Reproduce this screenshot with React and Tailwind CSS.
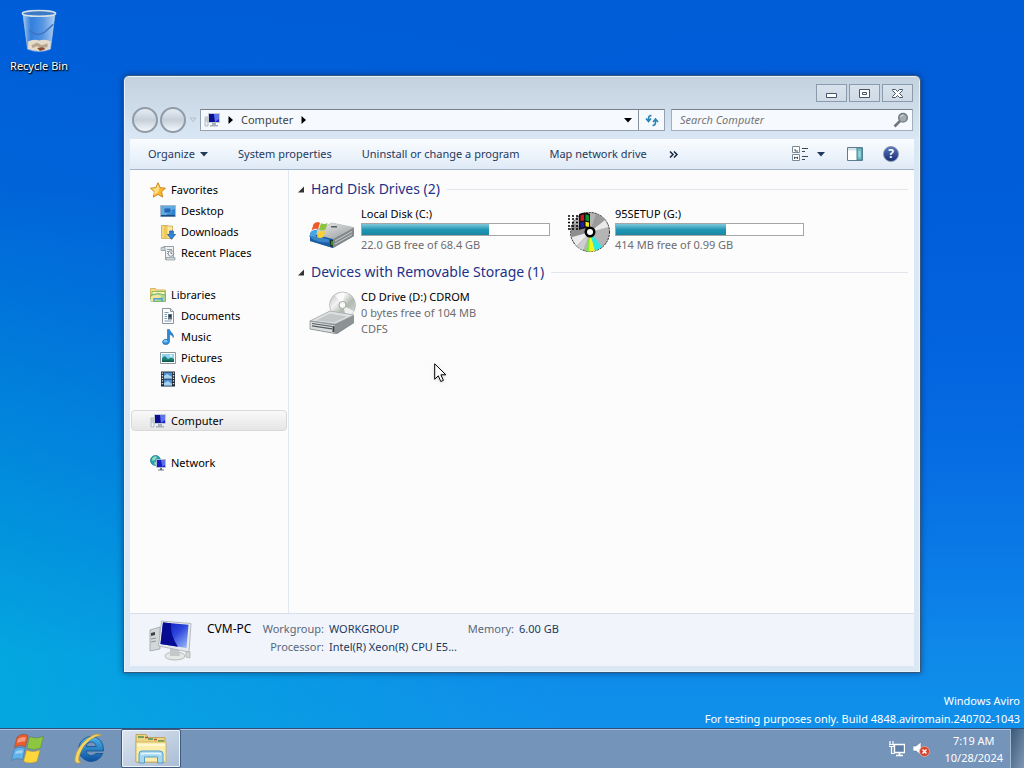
import { useState } from 'react';

const RecycleBinIcon = () => (
  <svg width="38" height="46" viewBox="0 0 40 46" aria-hidden="true">
    <defs>
      <linearGradient id="bin" x1="0" x2="1">
        <stop offset="0" stopColor="#cfe2f2" stopOpacity=".85" />
        <stop offset=".25" stopColor="#5b9be0" stopOpacity=".55" />
        <stop offset=".6" stopColor="#8cb9ea" stopOpacity=".6" />
        <stop offset="1" stopColor="#d7e6f4" stopOpacity=".85" />
      </linearGradient>
    </defs>
    <path d="M3 4 L8 42 Q20 47 32 42 L37 4 Z" fill="url(#bin)" stroke="#a9c6e2" strokeWidth=".8" />
    <path d="M8.500 34 Q14 31 20 33 Q27 31 32.500 34 L31.500 42 Q20 46 8.500 42 Z" fill="#e6dccb" />
    <path d="M12 38 l6 -3 l5 3 l6 -2 v4 l-7 1 l-4 -2 l-5 2z" fill="#b9a68f" />
    <path d="M18 41 l6 -1 l3 2 l-6 2z" fill="#8a4a2e" />
    <path d="M10 22 Q18 30 26 24 L35 16" fill="none" stroke="#3f72c4" strokeWidth="1.500" />
    <ellipse cx="20" cy="4.500" rx="17.500" ry="3" fill="#3c7ac6" stroke="#d5e0e8" strokeWidth="1.600" />
  </svg>
);

const ComputerIcon = () => (
  <svg width="16" height="16" viewBox="0 0 16 16" aria-hidden="true">
    <path d="M1 5h3v9H1z" fill="#eceff1" stroke="#a4acb3" strokeWidth=".8" />
    <path d="M1.500 7h2M1.500 9h2" stroke="#8d969e" strokeWidth=".7" />
    <path d="M4.500 1.500h11v9h-11z" fill="#1a22c8" stroke="#c4cad4" />
    <path d="M5 2h5l1 8H5z" fill="#0a0f90" />
    <path d="M10 2h5v5l-4 3z" fill="#5f74ea" />
    <path d="M8 11h4v2h2v1.500H6V13h2z" fill="#a7b0ba" />
  </svg>
);

const StarIcon = () => (
  <svg width="16" height="16" viewBox="0 0 16 16" aria-hidden="true">
    <path d="M8 .7l2.200 4.900 5.300.6-3.900 3.600 1.100 5.300L8 12.400l-4.700 2.700 1.100-5.300L.5 6.200l5.300-.6z" fill="#fbb62b" stroke="#c8801c" strokeWidth=".9" />
    <path d="M8 2.600l1.500 3.700-1.500 4-4.500 3 1.300-4.200L2 6.800l4.200-.5z" fill="#ffe08a" />
  </svg>
);

const DesktopIcon = () => (
  <svg width="16" height="16" viewBox="0 0 16 16" aria-hidden="true">
    <path d="M.5 2.500h15v11H.5z" fill="#2f82cc" stroke="#a8bccd" />
    <path d="M1 3h14v3Q9 7 6 12.500H1z" fill="#5ea9e0" />
    <path d="M4 5h7v5H4z" fill="#2166b4" stroke="#7db8e6" strokeWidth=".7" />
    <path d="M1 12h14v1.500H1z" fill="#1a4d86" />
  </svg>
);

const DownloadsIcon = () => (
  <svg width="16" height="16" viewBox="0 0 16 16" aria-hidden="true">
    <path d="M1.500 1.500h6v13h-6z" fill="#f3d87b" stroke="#cda94a" strokeWidth=".8" />
    <path d="M5.500 2h7v12.500h-7z" fill="#fae8a6" stroke="#cda94a" strokeWidth=".8" />
    <path d="M4 1.500l3.500 2v11.800L4 13.500z" fill="#edc95c" />
    <path d="M9.700 7h3.600v3.500h2.200l-4 4.800-4-4.800h2.200z" fill="#2f86d6" stroke="#195ba3" strokeWidth=".8" />
  </svg>
);

const RecentIcon = () => (
  <svg width="16" height="16" viewBox="0 0 16 16" aria-hidden="true">
    <path d="M3.500 1.500h10v13h-8v-9h-4v-2z" fill="#edf0f2" stroke="#8f999f" strokeWidth=".9" />
    <path d="M1 2.500h4v3H1zM6 12.500h9v2.500H6z" fill="#cfd6da" stroke="#8f999f" strokeWidth=".7" />
    <path d="M7 4.500h5M7 6.500h2M7 8.500h2" stroke="#98a4ac" />
    <circle cx="11" cy="8.500" r="2.800" fill="#f8fafb" stroke="#7f8a92" strokeWidth=".9" />
    <path d="M11 6.800v1.900h1.500" fill="none" stroke="#4a5864" strokeWidth=".8" />
  </svg>
);

const LibrariesIcon = () => (
  <svg width="16" height="16" viewBox="0 0 16 16" aria-hidden="true">
    <path d="M.5 1.500h5l1 1.500h9v9H.5z" fill="#f5dd82" stroke="#c9a948" strokeWidth=".8" />
    <path d="M2 4.500h13v4H2z" fill="#fdf3c2" stroke="#82b955" strokeWidth=".9" />
    <path d="M1 8Q8 5 15.500 8v6.500H1z" fill="#a8d68f" stroke="#6fae60" strokeWidth=".8" />
    <path d="M1 9.500Q7 7 12 9L3.500 14.500H1z" fill="#f7e59b" />
    <path d="M4 14.500v-2.800h8v2.800" fill="none" stroke="#4ea2d8" strokeWidth="1.500" />
  </svg>
);

const DocumentsIcon = () => (
  <svg width="16" height="16" viewBox="0 0 16 16" aria-hidden="true">
    <path d="M2.500.5h8l3 3v12h-11z" fill="#fcfdfe" stroke="#8b959d" />
    <path d="M10.500.5v3h3" fill="#dfe5ea" stroke="#8b959d" />
    <path d="M4.500 4.500h4M4.500 6.500h2.500M4.500 8.500h2.500M4.500 10.500h2.500M4.500 13h7" stroke="#8197ab" />
    <path d="M8 6h4v5.500H8z" fill="#5d7388" />
    <path d="M9 7h2v2H9z" fill="#263746" />
  </svg>
);

const MusicIcon = () => (
  <svg width="16" height="16" viewBox="0 0 16 16" aria-hidden="true">
    <path d="M7.500.5h2c.5 3 4.500 3.500 3.800 8-.6-2-2-2.700-3.800-3v7c-.2 4-6.700 4-7 .7C2.400 10.700 5.500 9.800 7.500 10.500z" fill="#2b8ad6" stroke="#1f65a8" strokeWidth=".6" />
    <ellipse cx="5.500" cy="12.300" rx="2" ry="1.300" fill="#7cc4f1" />
  </svg>
);

const PicturesIcon = () => (
  <svg width="16" height="16" viewBox="0 0 16 16" aria-hidden="true">
    <path d="M.5 2.500h15v11H.5z" fill="#fff" stroke="#8d979e" />
    <path d="M2 4h12v8H2z" fill="#8fd3ec" />
    <path d="M2 8l3-2 3 3 3-1.500 3 1.500v3H2z" fill="#1f8176" />
    <path d="M2 10.500h12V12H2z" fill="#0f564d" />
    <circle cx="11" cy="5.800" r="1" fill="#fff" />
  </svg>
);

const VideosIcon = () => (
  <svg width="16" height="16" viewBox="0 0 16 16" aria-hidden="true">
    <path d="M1 .5h14v15H1z" fill="#1f2a36" />
    <path d="M4 1.500h8v6H4zM4 8.500h8v6H4z" fill="#4f8fd0" />
    <path d="M4 5l3-2 5 3v1.500H4zM4 12l4-2 4 3v1.500H4z" fill="#a7d2f0" />
    <path d="M2.500 1.500v13M13.500 1.500v13" stroke="#dbe3ea" strokeWidth="1.400" strokeDasharray="1.300 1.300" />
  </svg>
);

const NetworkIcon = () => (
  <svg width="16" height="16" viewBox="0 0 16 16" aria-hidden="true">
    <circle cx="5.500" cy="5.500" r="5" fill="#24a2b8" stroke="#19778c" strokeWidth=".7" />
    <path d="M2 3.500Q5 0 7 2L5 5 2.500 6zM4 7.500l3-1v3l-2 .8z" fill="#8be0b0" />
    <path d="M6.500 4.500h9v8h-9z" fill="#161ec0" stroke="#bac3d2" strokeWidth=".9" />
    <path d="M11 5h4v5l-2.500 2z" fill="#5c70e8" />
    <path d="M10 13h2v1.500h2v1H8v-1h2z" fill="#6b7684" />
  </svg>
);

const HardDiskIcon = () => (
  <svg width="48" height="48" viewBox="0 0 48 48" aria-hidden="true">
    <defs>
      <linearGradient id="hddTop" x1="0" y1="0" x2="1" y2="1">
        <stop offset="0" stopColor="#f0f1f1" />
        <stop offset="1" stopColor="#979b9d" />
      </linearGradient>
    </defs>
    <path d="M2 27L24 17l22 4.500v8.500L25 42 2 35z" fill="#6d7376" />
    <path d="M2 27L24 17l22 4.500L25 33z" fill="url(#hddTop)" stroke="#c6cacb" strokeWidth=".8" />
    <path d="M25 33l21-11.500v8.500L25 42z" fill="#84898c" />
    <path d="M27 35l17-9.500M27 38l17-9.500" stroke="#c9cdcf" />
    <path d="M2 27l23 6v9L2 35z" fill="#1a5ea8" />
    <path d="M3 29l18 4.500v3Q10 37 3 32z" fill="#3b86c6" />
    <path d="M22 33.500l3 .5v7l-3-.8z" fill="#26332c" />
    <path d="M23.500 35l1 .2v4l-1-.2z" fill="#47d34a" />
    <path d="M23 20h6v1.500h-6z" fill="#565c60" />
    <path d="M5.500 18q4-3.500 6.500-1l-2 6.500q-3-2-6.500 1z" fill="#ef5a2c" />
    <path d="M13 17q3 2 6.500 0l-2 6.500q-3.500 2-6.500 0z" fill="#8bc53f" />
    <path d="M3 25.500q4-3 6.500-1l-2 6.500q-3-2-6.500 0z" fill="#48a5e4" />
    <path d="M11 24.500q3 2 6.500 0l-2 6.500q-3.500 2-6.500 0z" fill="#fbd034" />
  </svg>
);

const SetupDiscIcon = () => (
  <svg width="48" height="48" viewBox="-3 0 48 48" aria-hidden="true">
    <circle cx="25" cy="26" r="19.500" fill="#b4b4b4" stroke="#202020" strokeDasharray="2 1" />
    <path d="M25 26L8 17a19 19 0 0 0-1.500 14z" fill="#8e8e8e" />
    <path d="M25 26L31 7.500a19 19 0 0 1 12 12z" fill="#9a9a9a" />
    <path d="M25 26L40 14l3.500 7z" fill="#e9e9e9" />
    <path d="M25 26L6.500 31.500l5 8.500z" fill="#ececec" />
    <path d="M25 26L12 40.500l6 4z" fill="#cfcfcf" />
    <path d="M25 26l-2 19.300q3.500.5 7-.5z" fill="#f2f51c" />
    <path d="M25 26l5 18.800q4-1.300 7-4z" fill="#2be9e4" />
    <path d="M25 26l-4 19 3 .5z" fill="#7ee83c" />
    <path d="M3 10h10M3 13h10M3 16.500h10M3 20h10M3 23h10" stroke="#000" strokeWidth="1.400" strokeDasharray="2 2" />
    <path d="M14 8q6-3 11 0v16q-5-3-11 0z" fill="#111" />
    <path d="M15.500 9.500q2-1 3.500-1v6l-3.500.7z" fill="#d0161c" />
    <path d="M20.500 8.500q1.500 0 3.500 1v5.700l-3.500-.8z" fill="#129332" />
    <path d="M15.500 16.500l3.500-.7V21l-3.500.8z" fill="#161cc0" />
    <path d="M20.500 15.800l3.500.8V21l-3.500-.8z" fill="#f0e21d" />
    <circle cx="25" cy="26" r="5.500" fill="#000" />
    <circle cx="25" cy="26" r="3" fill="#fff" />
  </svg>
);

const CdDriveIcon = () => (
  <svg width="48" height="48" viewBox="0 0 48 48" aria-hidden="true">
    <defs>
      <linearGradient id="cdDisc" x1="0" y1="0" x2="1" y2="1">
        <stop offset="0" stopColor="#b7bab9" />
        <stop offset=".35" stopColor="#f2f3f2" />
        <stop offset=".6" stopColor="#b0b8af" />
        <stop offset="1" stopColor="#e0e3e0" />
      </linearGradient>
    </defs>
    <circle cx="34.500" cy="16" r="13" fill="url(#cdDisc)" stroke="#b5b9b8" strokeWidth=".8" />
    <path d="M34.500 16L27 6.500q5-4 10-2.500zM34.500 16l11 6q-2 5-7 6z" fill="#fff" opacity=".75" />
    <circle cx="34.500" cy="16" r="3.500" fill="#fafafa" stroke="#9ea3a2" />
    <path d="M2 32L22 22l24 4v8L29 45 2 40z" fill="#83898b" />
    <path d="M2 32L22 22l24 4-19 9z" fill="#dfe1e1" stroke="#aaafb0" strokeWidth=".8" />
    <path d="M8 31.500l14-7 17 3-13 6z" fill="#c3c7c8" />
    <path d="M2 32l25 4v8.500L2 40z" fill="#d9dcdd" stroke="#7e8486" strokeWidth=".7" />
    <path d="M4 34.500l20 3M4 36.800l20 3" stroke="#555b5e" strokeWidth="1.200" />
    <path d="M27 36l19-9.500V34L27 44.500z" fill="#8d9294" />
    <path d="M24.500 37l2 .3v6l-2-.3z" fill="#3c4346" />
  </svg>
);

const BigComputerIcon = () => (
  <svg width="44" height="42" viewBox="0 0 44 42" aria-hidden="true">
    <defs>
      <linearGradient id="screen" x1="0" y1="0" x2="1" y2="1">
        <stop offset="0" stopColor="#0a12b4" />
        <stop offset=".5" stopColor="#2c46dc" />
        <stop offset="1" stopColor="#a3c0fa" />
      </linearGradient>
    </defs>
    <path d="M1 10l10-3v22L1 31z" fill="#d3d7d9" stroke="#9ba2a6" strokeWidth=".8" />
    <path d="M2 13l4-1v3l-4 1z" fill="#3c444a" />
    <path d="M2 19l5-1M2 22l5-1" stroke="#8c9498" />
    <ellipse cx="26" cy="36" rx="10" ry="4" fill="#e6e8e6" stroke="#a9adab" strokeWidth=".8" />
    <path d="M21 28h9l1 8h-10z" fill="#c4c8c8" />
    <path d="M37 31l4 1v6l-4-1z" fill="#d5d7d5" stroke="#a9adab" strokeWidth=".7" />
    <path d="M12.500 1L42 3.500 40 32 9.500 26z" fill="#e7eaec" stroke="#a6adb2" strokeWidth=".8" />
    <path d="M14 2.500l25.500 2.300L37.500 28 11.500 24z" fill="url(#screen)" />
    <path d="M14 2.500l8 .8q-1 12 7 23.500l-17.500-2.800z" fill="#060c92" />
  </svg>
);

const StartIcon = () => (
  <svg width="34" height="34" viewBox="0 0 34 34" aria-hidden="true">
    <path d="M6 5q6-4.500 11-1.500L14.500 15q-5-3-11 .5z" fill="#ea5a2a" stroke="#8c4634" strokeWidth=".5" />
    <path d="M18.500 4.500q6 3 14 0L29.500 16q-7 3-13.500 0z" fill="#8dc63f" stroke="#57803c" strokeWidth=".5" />
    <path d="M3 17.500q6-4 11-1L11.500 28q-5-3-11 .5z" fill="#5fb2ea" stroke="#3c6c98" strokeWidth=".5" />
    <path d="M15.500 18q6 3 13.500 0l-3 11.500q-7 3-13.500 0z" fill="#fdd73c" stroke="#a98938" strokeWidth=".5" />
    <path d="M7 7q5-3 8-1.500l-1 4Q10 9 6 11zM5 19.500q4-2 7-1l-1 3q-4-1-7 1z" fill="#fff" opacity=".4" />
  </svg>
);

const IeIcon = () => (
  <svg width="34" height="34" viewBox="0 0 34 34" aria-hidden="true">
    <defs>
      <linearGradient id="ie" x1="0" y1="0" x2="0" y2="1">
        <stop offset="0" stopColor="#4db4ec" />
        <stop offset="1" stopColor="#0b509f" />
      </linearGradient>
    </defs>
    <path d="M18 4.500a12.500 12.500 0 1 0 11.800 17h-7q-1.500 2-4.300 2-4.500 0-5.300-4.500H30.500Q31 5.500 18 4.500zM13.200 14.500q1-4.500 5.200-4.500t4.800 4.500z" fill="url(#ie)" stroke="#14508e" strokeWidth=".8" fillRule="evenodd" />
    <path d="M29 4Q25-1 14 7 4 15 2 26q-1 7 6 4.500-4-1-1-8.500Q10 13 17 8q9-6 12-4z" fill="#f4d566" stroke="#bb9230" strokeWidth=".6" />
  </svg>
);

const ExplorerIcon = () => (
  <svg width="34" height="32" viewBox="0 0 34 32" aria-hidden="true">
    <path d="M2 1.500h10l2 3h17V29H2z" fill="#eed584" stroke="#b89a48" strokeWidth=".8" />
    <path d="M4 4h6M14 6h5M24 8h6" stroke="#4f8f4d" strokeWidth="1.500" />
    <path d="M11 4.500h3M20 6.500h3" stroke="#b0563a" strokeWidth="1.500" />
    <path d="M2 9h30v20H2z" fill="#fbeeac" stroke="#c8ab58" strokeWidth=".8" />
    <path d="M3 12h28" stroke="#fff8d4" strokeWidth="2" />
    <path d="M5 30V21q0-3 3-3h18q3 0 3 3v9h-5.500v-6h-13v6z" fill="#a5d7f0" stroke="#569dc7" />
    <path d="M7.500 22q0-1.500 2-1.500h15q2 0 2 1.500" fill="none" stroke="#e5f5fc" strokeWidth="1.500" />
  </svg>
);

const Caret = () => (
  <svg width="8" height="5" viewBox="0 0 8 5" aria-hidden="true"><path d="M0 0h8L4 4.500z" fill="currentColor" /></svg>
);

const RightArrow = () => (
  <svg width="5" height="8" viewBox="0 0 5 8" aria-hidden="true"><path d="M.5 0v8L5 4z" fill="#000" /></svg>
);

const CaptionButton = ({ label, children }) => (
  <button aria-label={label} className="w-[31px] h-[18px] flex items-center justify-center border border-[#8b9bae] bg-gradient-to-b from-[#d8e2ec] to-[#cfdae6]">
    <svg width="13" height="11" viewBox="0 0 13 11" fill="#fff" stroke="#46536a" aria-hidden="true">{children}</svg>
  </button>
);

const sidebar = [
  { name: 'Favorites', Icon: StarIcon, items: [
    { name: 'Desktop', Icon: DesktopIcon },
    { name: 'Downloads', Icon: DownloadsIcon },
    { name: 'Recent Places', Icon: RecentIcon },
  ] },
  { name: 'Libraries', Icon: LibrariesIcon, items: [
    { name: 'Documents', Icon: DocumentsIcon },
    { name: 'Music', Icon: MusicIcon },
    { name: 'Pictures', Icon: PicturesIcon },
    { name: 'Videos', Icon: VideosIcon },
  ] },
  { name: 'Computer', Icon: ComputerIcon, items: [] },
  { name: 'Network', Icon: NetworkIcon, items: [] },
];

const Sidebar = () => {
  const [selected, setSelected] = useState('Computer');
  return (
    <nav className="w-[159px] shrink-0 flex flex-col gap-[21px] pt-[9px] px-px border-r border-[#e1e8f2]">
      {sidebar.map(({ name, Icon, items }) => (
        <div key={name}>
          <a
            href="#"
            onClick={() => setSelected(name)}
            className={selected === name
              ? 'h-[21px] flex items-center gap-[5px] pl-[18px] rounded-sm border border-[#d9d9d9] bg-gradient-to-b from-[#f9f9f9] to-[#e6e6e6]'
              : 'h-[21px] flex items-center gap-[5px] pl-[18px] border border-transparent'}
          >
            <Icon />
            {name}
          </a>
          {items.map((item) => (
            <a key={item.name} href="#" className="h-[21px] flex items-center gap-[5px] pl-[29px]">
              <item.Icon />
              {item.name}
            </a>
          ))}
        </div>
      ))}
    </nav>
  );
};

const GroupHeader = ({ children }) => (
  <div className="h-[22px] flex items-center gap-[7px] pl-[9px]">
    <svg width="6" height="7" viewBox="0 0 6 7" aria-hidden="true"><path d="M6 .5v6H0z" fill="#333" /></svg>
    <h2 className="text-[14px] leading-[22px] text-[#1e3287]">{children}</h2>
    <div className="flex-1 h-px bg-[#e2e5ec]" />
  </div>
);

const Drive = ({ Icon, name, used, lines }) => (
  <div className="w-[254px] flex gap-[5px]">
    <div className="shrink-0 pt-[3px]"><Icon /></div>
    <div className="flex-1 mr-3 pt-[3px] leading-4">
      <div>{name}</div>
      {used && (
        <div className="h-[13px] my-px border border-[#a6a6a6] bg-white">
          <div
            className="h-full bg-gradient-to-b from-[#7cc9dc] via-[#1f97b5] to-[#1b86a3]"
            style={{ width: `${used}%` }}
          />
        </div>
      )}
      {lines.map((line) => <div key={line} className="text-[#6d6d6d]">{line}</div>)}
    </div>
  </div>
);

const ExplorerWindow = () => (
  <section className="absolute top-[75px] left-[123px] right-[103px] bottom-[55px] flex flex-col px-[6px] pb-[6px] rounded-t-md border border-[#35597c] bg-[#d9e6f2] bg-gradient-to-b from-[#c3d0dd] to-[#dae7f4] to-[64px] shadow-[inset_0_0_0_1px_#e9f3fb,0_0_6px_rgba(0,20,70,0.5)]">
    <header className="pt-2 pb-2 pl-[2px] pr-px">
      <div className="flex justify-end gap-[2px]">
        <CaptionButton label="Minimize"><path d="M1.500 5.500h10v4h-10z" /></CaptionButton>
        <CaptionButton label="Maximize"><path d="M1.500 1.500h10v8h-10zM4.500 4.500h4v2h-4z" /></CaptionButton>
        <CaptionButton label="Close">
          <path d="M1.500 1.500h3l2 2 2-2h3v1l-3 3 3 3v1h-3l-2-2-2 2h-3v-1l3-3-3-3z" />
        </CaptionButton>
      </div>
      <div className="h-[22px] mt-[7px] flex items-center">
        <button aria-label="Back" className="size-[26px] shrink-0 rounded-full border-2 border-[#8f9ba8] bg-gradient-to-b from-[#e4ebf2] via-[#c7d0da] to-[#f1f6fa]" />
        <button aria-label="Forward" className="size-[26px] shrink-0 ml-[2px] rounded-full border-2 border-[#8f9ba8] bg-gradient-to-b from-[#e4ebf2] via-[#c7d0da] to-[#f1f6fa]" />
        <button aria-label="Recent pages" className="ml-[3px] text-[#b4c0cd]">
          <svg width="8" height="6" viewBox="0 0 8 6" fill="none" stroke="currentColor" aria-hidden="true"><path d="M1 1h6L4 4.500z" /></svg>
        </button>
        <div className="ml-[3px] flex-1 h-[22px] flex items-center border border-[#93a1b1] border-t-[#76808c] bg-[#f6fafe]">
          <div className="flex items-center gap-2 pl-[3px]">
            <ComputerIcon />
            <RightArrow />
            <a href="#" className="text-[#444]">Computer</a>
            <RightArrow />
          </div>
          <button aria-label="Previous locations" className="ml-auto mr-[5px] h-full px-px flex items-center"><Caret /></button>
          <button aria-label="Refresh" className="w-[26px] h-full flex items-center justify-center border-l border-[#8492a2]">
            <svg width="14" height="14" viewBox="0 0 14 14" fill="none" stroke="#2b83b4" strokeWidth="1.600" aria-hidden="true">
              <path d="M6.500 2.500q-3 0-3 3v2M1 5.500l2.500 3 2.500-3M7.500 12.500q3 0 3-3.500V7M8 9l2.500-3L13 9" />
            </svg>
          </button>
        </div>
        <label className="ml-[6px] w-[242px] h-[22px] flex items-center pl-2 pr-[3px] border border-[#a3afbd] border-t-[#76808c] bg-[#f6fafe]">
          <input type="text" aria-label="Search Computer" placeholder="Search Computer" className="flex-1 min-w-0 bg-transparent italic outline-none placeholder:text-[#757575]" />
          <svg width="16" height="16" viewBox="0 0 16 16" fill="none" aria-hidden="true">
            <path d="M1.500 14.500L7 9" stroke="#6e7780" strokeWidth="2.600" />
            <circle cx="10" cy="5.800" r="4.300" fill="#a3aab0" stroke="#70797f" strokeWidth="1.400" />
            <path d="M7.500 5q1-2 3-2" stroke="#dde2e5" />
          </svg>
        </label>
      </div>
    </header>

    <div className="h-[31px] shrink-0 flex items-center pl-[18px] pr-[15px] border-b border-[#a3b5c8] bg-gradient-to-b from-[#fafcff] via-[#edf4fc] to-[#dfeaf6] text-[#1e395b] whitespace-nowrap">
      <div className="flex items-center gap-[30px]">
        <button className="flex items-center gap-[5px]">Organize <Caret /></button>
        <button>System properties</button>
        <button>Uninstall or change a program</button>
        <button>Map network drive</button>
      </div>
      <button aria-label="More commands" className="ml-[22px]">
        <svg width="9" height="7" viewBox="0 0 9 7" fill="none" stroke="#14263e" strokeWidth="1.500" aria-hidden="true"><path d="M1 .5l3 3-3 3M5 .5l3 3-3 3" /></svg>
      </button>
      <div className="ml-auto flex items-center">
        <button aria-label="View">
          <svg width="16" height="16" viewBox="0 0 16 16" fill="#fff" stroke="#7b8895" aria-hidden="true">
            <path d="M.5.500h7v6h-7zM.5 8.500h7v6h-7z" />
            <path d="M3 3v2h3M2.500 13v-2l1.500 1 1.500-1v2" fill="none" stroke="#3d5068" />
            <path d="M10 2.500h6M10 5.500h3M10 10.500h6M10 13.500h3" stroke="#3d4855" />
          </svg>
        </button>
        <button aria-label="View options" className="ml-[9px]"><Caret /></button>
        <button aria-label="Preview pane" className="ml-[22px]">
          <svg width="16" height="14" viewBox="0 0 16 14" aria-hidden="true">
            <path d="M.5.500h15v13H.5z" fill="#fff" stroke="#5f7c93" />
            <path d="M1 1h14v2.500H1z" fill="#d4e2ed" />
            <path d="M10 1h5v12h-5z" fill="#6ebcc6" stroke="#46828f" />
            <path d="M11.500 5h2M11.500 7h2M11.500 9h2" stroke="#d7f1f3" />
          </svg>
        </button>
        <button aria-label="Help" className="ml-5 size-4 rounded-full border border-[#8492b0] bg-gradient-to-b from-[#5a75b8] to-[#1b2f78] text-white text-[12px] leading-[14px] font-bold">?</button>
      </div>
    </div>

    <div className="flex-1 min-h-0 flex bg-[#fcfcfd]">
      <Sidebar />
      <main className="flex-1 min-w-0 pt-2 pr-[6px]">
        <GroupHeader>Hard Disk Drives (2)</GroupHeader>
        <div className="h-[61px] flex flex-wrap pl-[19px] pt-[3px]">
          <Drive Icon={HardDiskIcon} name="Local Disk (C:)" used={68} lines={['22.0 GB free of 68.4 GB']} />
          <Drive Icon={SetupDiscIcon} name="95SETUP (G:)" used={59} lines={['414 MB free of 0.99 GB']} />
        </div>
        <GroupHeader>Devices with Removable Storage (1)</GroupHeader>
        <div className="flex pl-[19px] pt-[3px]">
          <Drive Icon={CdDriveIcon} name="CD Drive (D:) CDROM" lines={['0 bytes free of 104 MB', 'CDFS']} />
        </div>
      </main>
    </div>

    <footer className="h-[53px] shrink-0 flex pt-[6px] pl-[19px] border-t border-[#d6e1ec] bg-[#f1f5fb] leading-[18px] text-[#1e395b]">
      <BigComputerIcon />
      <div className="ml-[14px] w-12 text-[12px] text-black whitespace-nowrap">CVM-PC</div>
      <dl className="ml-[5px] grid grid-cols-[64px_132px_48px_auto] gap-x-[5px] whitespace-nowrap content-start">
        <dt className="text-right text-[#5a6779]">Workgroup:</dt>
        <dd>WORKGROUP</dd>
        <dt className="text-right text-[#5a6779]">Memory:</dt>
        <dd>6.00 GB</dd>
        <dt className="text-right text-[#5a6779]">Processor:</dt>
        <dd>Intel(R) Xeon(R) CPU E5...</dd>
      </dl>
    </footer>
  </section>
);

const Taskbar = () => (
  <footer className="h-10 flex items-center border-t border-[#31517c] bg-[#7594ba] shadow-[inset_0_1px_0_#a9c0dc] text-white">
    <button aria-label="Start" className="ml-[11px]"><StartIcon /></button>
    <button aria-label="Internet Explorer" className="ml-[28px]"><IeIcon /></button>
    <button aria-label="Windows Explorer" className="ml-[14px] w-[60px] h-[39px] flex items-center justify-center rounded-xs border border-[#3f5b80] bg-gradient-to-br from-[#dde5ee] to-[#a9bdd6] shadow-[inset_0_0_0_1px_#eef4fa]">
      <ExplorerIcon />
    </button>
    <div className="ml-auto flex items-center h-full">
      <svg width="16" height="16" viewBox="0 0 16 16" aria-label="Network">
        <path d="M5.500 3.500h10v8h-10z" fill="#5f7ea6" stroke="#fff" strokeWidth="1.400" />
        <path d="M7 14.500h7M10.500 12v2" stroke="#fff" strokeWidth="1.600" />
        <path d="M1 0v3M4 0v3M0 3.500h5v2H0zM2.500 5v7.500h3" fill="none" stroke="#fff" strokeWidth="1.200" />
      </svg>
      <svg className="ml-2" width="17" height="16" viewBox="0 0 17 16" aria-label="Volume muted">
        <path d="M0 5h3l5-4v13l-5-4H0z" fill="#fff" stroke="#52698a" strokeWidth=".5" />
        <circle cx="11.500" cy="10.500" r="5" fill="#d2432c" stroke="#f0b3a5" strokeWidth=".7" />
        <path d="M9.500 8.500l4 4M13.500 8.500l-4 4" stroke="#fff" strokeWidth="1.500" />
      </svg>
      <div className="ml-[14px] mr-[7px] text-center leading-[17px]">
        <div>7:19 AM</div>
        <div>10/28/2024</div>
      </div>
      <button aria-label="Show desktop" className="w-[14px] h-full border-l border-[#a5bad4] bg-gradient-to-br from-[#3d5878] to-[#8098b8]" />
    </div>
  </footer>
);

const App = () => {
  return (
    <div className="h-screen flex flex-col overflow-hidden text-[11px] leading-4 font-['Noto_Sans','Open_Sans',sans-serif] text-black cursor-default">
      <div className="relative flex-1 min-h-0 bg-[linear-gradient(100deg,rgba(0,176,220,0.9),rgba(0,140,230,0)_60%),linear-gradient(#0050e8,#1090ea)]">
        <div className="absolute inset-0 bg-[linear-gradient(#005dd8,rgba(0,93,216,0.9)_25%,rgba(0,120,220,0)_90%)]" />
        <a href="#" className="relative w-[78px] pt-2 flex flex-col items-center gap-1 text-white [text-shadow:0_1px_2px_#000,1px_1px_1px_#000]">
          <RecycleBinIcon />
          Recycle Bin
        </a>
        <p className="absolute right-1 bottom-0 text-right leading-[18px] text-white">
          Windows Aviro<br />
          For testing purposes only. Build 4848.aviromain.240702-1043
        </p>
        <ExplorerWindow />
        <svg className="absolute left-[434px] top-[363px] drop-shadow" width="13" height="20" viewBox="0 0 13 20" aria-hidden="true">
          <path d="M.7.800v15.400l3.600-3.400 2.500 5.700 2.600-1.100-2.500-5.600h5z" fill="#fff" stroke="#000" />
        </svg>
      </div>
      <Taskbar />
    </div>
  );
};

export default App;
